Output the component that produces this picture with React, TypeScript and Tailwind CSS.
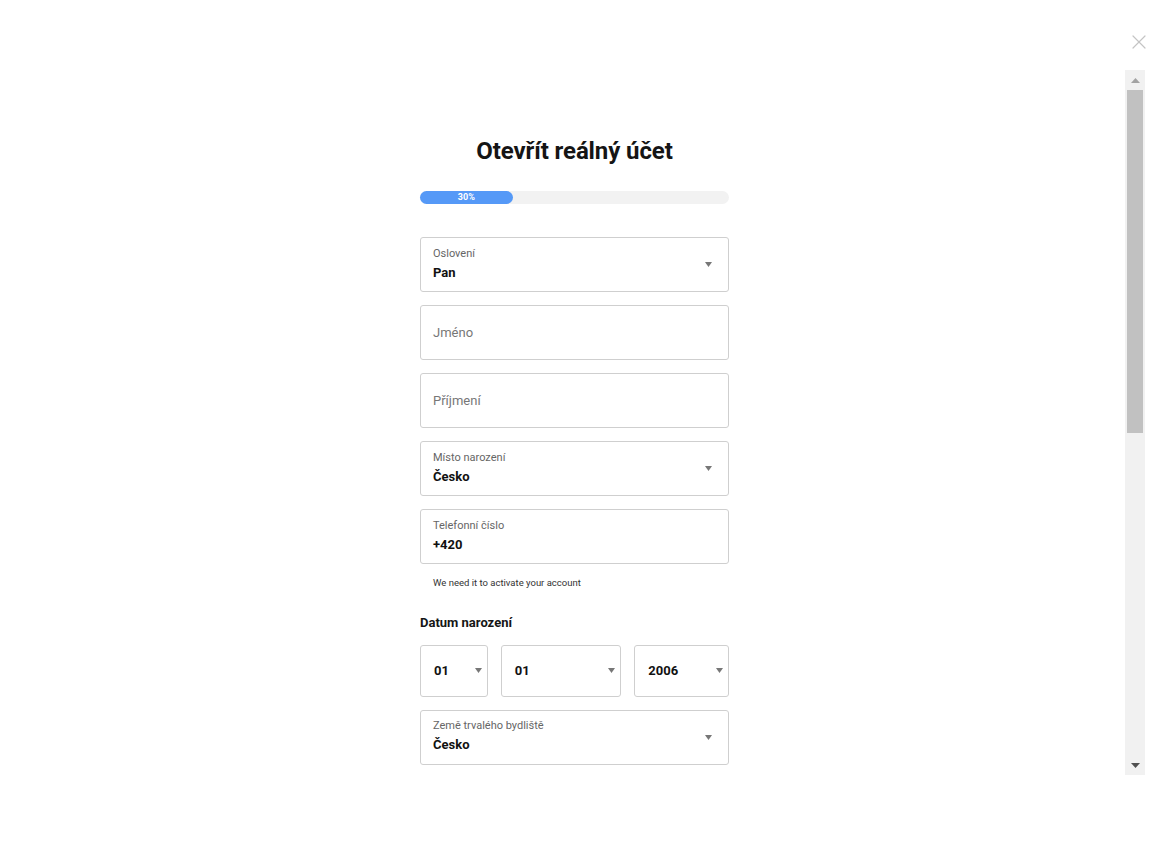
import { X } from 'lucide-react'

function Caret() {
  return (
    <svg width="7" height="5" viewBox="0 0 7 5" className="shrink-0">
      <path d="M0 0h7L3.5 5z" fill="#777" />
    </svg>
  )
}

function SelectField({ label, value }: { label: string; value: string }) {
  return (
    <div className="h-[55px] border border-[#cfcfcf] rounded-[3px] pl-[12px] pr-[16px] flex items-center justify-between">
      <div className="flex flex-col">
        <span className="text-[11px] leading-[14px] text-[#666]">{label}</span>
        <span className="text-[13px] leading-[20px] font-bold text-[#111] mt-[2px]">{value}</span>
      </div>
      <Caret />
    </div>
  )
}

function TextField({ label, value }: { label: string; value?: string }) {
  if (value) {
    return (
      <div className="h-[55px] border border-[#cfcfcf] rounded-[3px] pl-[12px] flex flex-col justify-center">
        <span className="text-[11px] leading-[14px] text-[#666]">{label}</span>
        <span className="text-[13px] leading-[20px] font-bold text-[#111] mt-[2px]">{value}</span>
      </div>
    )
  }
  return (
    <div className="h-[55px] border border-[#cfcfcf] rounded-[3px] pl-[12px] flex items-center">
      <span className="text-[13px] text-[#777]">{label}</span>
    </div>
  )
}

function DateBox({ value, width }: { value: string; width: string }) {
  return (
    <div className={`${width} h-[52px] border border-[#cfcfcf] rounded-[3px] pl-[13px] pr-[5px] flex items-center justify-between`}>
      <span className="text-[13px] font-bold text-[#111]">{value}</span>
      <Caret />
    </div>
  )
}

export default function App() {
  return (
    <div
      className="relative w-[1169px] h-[854px] bg-white overflow-hidden"
      style={{ fontFamily: 'Roboto, "Noto Sans", sans-serif' }}
    >
      <button className="absolute top-[30px] right-[18px] text-[#c4c4c4]">
        <X className="w-[24px] h-[24px]" strokeWidth={1.2} />
      </button>

      <div className="absolute top-[70px] left-[1125px] w-[20px] h-[705px] bg-[#f1f1f1] flex flex-col items-center">
        <div className="h-[20px] flex items-center justify-center">
          <svg width="9" height="5" viewBox="0 0 9 5"><path d="M0 5h9L4.5 0z" fill="#a3a3a3" /></svg>
        </div>
        <div className="w-[16px] h-[343px] bg-[#c1c1c1]" />
        <div className="flex-1" />
        <div className="h-[20px] flex items-center justify-center">
          <svg width="9" height="5" viewBox="0 0 9 5"><path d="M0 0h9L4.5 5z" fill="#505050" /></svg>
        </div>
      </div>

      <div className="w-[1149px] flex justify-center pt-[136px]">
        <div className="w-[309px] flex flex-col">
          <h1 className="text-center text-[24px] leading-[30px] font-bold text-[#151515] tracking-[-0.1px]">
            Otevřít reálný účet
          </h1>

          <div className="mt-[25px] h-[13px] rounded-full bg-[#f2f2f2] flex">
            <div className="w-[30%] h-full rounded-full bg-[#5599f7] flex items-center justify-center">
              <span className="text-[9px] font-bold text-white leading-none">30%</span>
            </div>
          </div>

          <div className="mt-[33px] flex flex-col gap-[13px]">
            <SelectField label="Oslovení" value="Pan" />
            <TextField label="Jméno" />
            <TextField label="Příjmení" />
            <SelectField label="Místo narození" value="Česko" />
            <TextField label="Telefonní číslo" value="+420" />
          </div>

          <p className="mt-[12px] pl-[13px] text-[9.5px] text-[#333]">We need it to activate your account</p>

          <p className="mt-[23px] text-[13px] font-bold text-[#151515]">Datum narození</p>

          <div className="mt-[12px] flex gap-[13px]">
            <DateBox value="01" width="w-[68px]" />
            <DateBox value="01" width="w-[121px]" />
            <DateBox value="2006" width="w-[95px]" />
          </div>

          <div className="mt-[13px]">
            <SelectField label="Země trvalého bydliště" value="Česko" />
          </div>
        </div>
      </div>
    </div>
  )
}
